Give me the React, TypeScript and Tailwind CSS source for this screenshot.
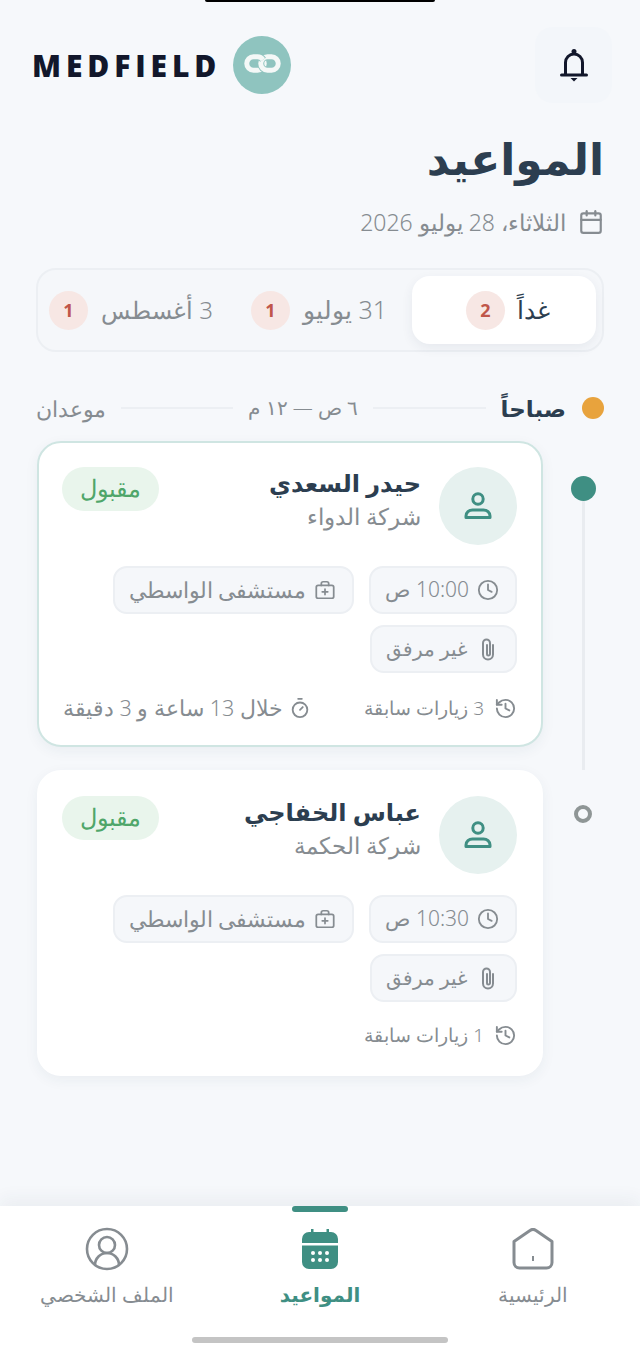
import { Calendar, Clock, History, Timer, CircleUserRound } from 'lucide-react'
import type { ReactNode } from 'react'

const ARABIC = "font-['Noto_Sans','DejaVu_Sans',sans-serif]"

function LinkLogo() {
  const left = 'M20.500 20.750h4a6.750 6.750 0 0 1 0 13.500h-4a6.750 6.750 0 0 1 0-13.500z'
  const right = 'M34.500 20.750h4a6.750 6.750 0 0 1 0 13.500h-4a6.750 6.750 0 0 1 0-13.500z'
  const over = 'M23 20.750h1.500a6.750 6.750 0 0 1 5.500 3'
  return (
    <svg viewBox="0 0 58 58" className="w-[58px] h-[58px]">
      <circle cx="29" cy="29" r="29" fill="#8fc4bf" />
      <g fill="none" strokeLinecap="butt">
        <path d={left} stroke="#f4f8f7" strokeWidth="5" />
        <path d={right} stroke="#8fc4bf" strokeWidth="7" />
        <path d={right} stroke="#f4f8f7" strokeWidth="5" />
        <path d={over} stroke="#8fc4bf" strokeWidth="7" />
        <path d={over} stroke="#f4f8f7" strokeWidth="5" />
      </g>
    </svg>
  )
}

function BellIcon() {
  return (
    <svg viewBox="0 0 28 34" className="w-7 h-[34px]" fill="none" stroke="#12172b" strokeWidth="3">
      <path d="M5.500 26V14.500a8.500 8.500 0 0 1 17 0V26" />
      <path d="M1.500 27h25" strokeLinecap="round" />
      <circle cx="14" cy="3.500" r="2.500" fill="#12172b" stroke="none" />
      <path d="M10.500 30h7L14 33.500z" fill="#12172b" stroke="none" />
    </svg>
  )
}

function PersonIcon() {
  return (
    <svg viewBox="0 0 32 32" fill="none" stroke="#3f8f83" strokeWidth="3" className="w-8 h-8">
      <circle cx="16" cy="9" r="5.200" />
      <path d="M4 27.500V26c0-3.500 3-6 6.500-6h11c3.500 0 6.500 2.500 6.500 6v1.500z" strokeLinejoin="round" />
    </svg>
  )
}

function MedicalIcon() {
  return (
    <svg viewBox="0 0 24 24" fill="none" stroke="#868c91" strokeWidth="1.900" strokeLinecap="round" strokeLinejoin="round" className="w-[22px] h-[22px]">
      <rect x="2.500" y="7" width="19" height="14" rx="2" />
      <path d="M8 7V5a2 2 0 0 1 2-2h4a2 2 0 0 1 2 2v2M12 11v6M9 14h6" />
    </svg>
  )
}

function ClipIcon() {
  return (
    <svg viewBox="4 0 16 24" fill="none" stroke="#868c91" strokeWidth="2" strokeLinecap="round" className="w-4 h-6 mr-[3px] ml-[5px]">
      <path d="M17 8v9.500a5 5 0 0 1-10 0V6a3.500 3.500 0 0 1 7 0v11a1.500 1.500 0 0 1-3 0V8" />
    </svg>
  )
}

function HomeIcon() {
  return (
    <svg viewBox="0 0 42 42" fill="none" stroke="#868c91" strokeWidth="3" strokeLinejoin="round" className="w-[42px] h-[42px]">
      <path d="M2 13.500 18 2.500a5 5 0 0 1 6 0l16 11v21a5.500 5.500 0 0 1-5.500 5.500h-27A5.500 5.500 0 0 1 2 34.500z" />
      <path d="M21 28v5" strokeWidth="2" />
    </svg>
  )
}

function CalendarFilled() {
  return (
    <svg viewBox="0 0 36 42" className="w-9 h-[42px]" fill="#3f8f83">
      <path d="M9 1h2.500v5H9zM24.500 1H27v5h-2.500z" />
      <path d="M7 4h22a7 7 0 0 1 7 7v4H0v-4a7 7 0 0 1 7-7zM0 17.500h36V34a7 7 0 0 1-7 7H7a7 7 0 0 1-7-7z" />
      <g fill="#fff">
        <circle cx="11" cy="25" r="2" /><circle cx="18" cy="25" r="2" /><circle cx="25" cy="25" r="2" />
        <circle cx="11" cy="32" r="2" /><circle cx="18" cy="32" r="2" /><circle cx="25" cy="32" r="2" />
      </g>
    </svg>
  )
}

function Chip({ icon, children }: { icon: ReactNode; children: ReactNode }) {
  return (
    <div className="h-[48px] flex items-center gap-[8px] pr-[16px] pl-[14px] bg-[#f5f7fa] border-2 border-[#eceff3] rounded-[14px] text-[21px] font-light text-[#868c91]">
      {icon}
      {children}
    </div>
  )
}

function AppointmentCard(props: { name: string; company: string; time: string; visits: string; countdown?: string; active?: boolean }) {
  return (
    <div className={`flex-1 h-[306px] bg-white rounded-[24px] pt-[24px] px-[24px] shadow-[0_4px_14px_rgba(40,60,80,0.06)] border-2 ${props.active ? 'border-[#cfe5e2]' : 'border-white'}`}>
      <div className="flex items-start gap-[18px]">
        <div className="w-[78px] h-[78px] rounded-full bg-[#e6f1ef] flex items-center justify-center shrink-0">
          <PersonIcon />
        </div>
        <div className="flex-1 -mt-[1px]">
          <div className="text-[24px] leading-[34px] font-bold text-[#2c3e50]">{props.name}</div>
          <div className="text-[22.500px] leading-[33px] font-light text-[#868c91]">{props.company}</div>
        </div>
        <div className="h-[44px] w-[97px] -ml-[1px] rounded-[22px] bg-[#e9f5ec] text-[#4fa66a] text-[23.500px] font-light flex items-center justify-center">مقبول</div>
      </div>
      <div className="flex flex-wrap gap-x-[15px] gap-y-[11px] mt-[21px]">
        <Chip icon={<Clock size={22} strokeWidth={2} />}><span>{props.time}</span></Chip>
        <Chip icon={<MedicalIcon />}><span className="text-[21.500px]">مستشفى الواسطي</span></Chip>
        <Chip icon={<ClipIcon />}><span className="text-[20px]">غير مرفق</span></Chip>
      </div>
      <div className="flex items-center justify-between mt-[19px] text-[19px] font-light text-[#868c91]">
        <div className="flex items-center gap-[10px]"><History size={23} strokeWidth={2} /><span>{props.visits}</span></div>
        {props.countdown && <div className="flex items-center gap-[6px] text-[21.500px]"><Timer size={22} strokeWidth={2} /><span>{props.countdown}</span></div>}
      </div>
    </div>
  )
}

function TabBadge({ n }: { n: number }) {
  return <span className="w-[39px] h-[39px] rounded-full bg-[#f7e7e4] text-[#c0564a] text-[18px] font-bold flex items-center justify-center">{n}</span>
}

export default function App() {
  return (
    <div dir="rtl" className={`${ARABIC} relative w-[640px] h-[1356px] bg-[#f6f8fb] flex flex-col overflow-hidden`}>
      <div className="absolute top-0 left-[205px] w-[230px] h-[2px] bg-black rounded-b-[4px]" />

      <header className="flex items-center justify-between pt-[27px] pr-[28px] pl-[32px]">
        <div className="w-[77px] h-[76px] rounded-[18px] bg-[#f3f6fa] flex items-center justify-center">
          <BellIcon />
        </div>
        <div dir="ltr" className="flex items-center gap-[12px]">
          <span className="font-['Open_Sans',sans-serif] font-extrabold text-[30px] tracking-[4.900px] text-[#12172b]">MEDFIELD</span>
          <LinkLogo />
        </div>
      </header>

      <main className="px-[36px]">
        <h1 className="text-[44px] leading-[52px] font-bold text-[#2c3e50] mt-[29px]">المواعيد</h1>
        <div className="flex items-center gap-[12px] mt-[24px] text-[#868c91] text-[23px] font-light leading-[28px]">
          <Calendar size={26} strokeWidth={2} />
          <span>الثلاثاء، 28 يوليو 2026</span>
        </div>

        <div className="flex items-center h-[84px] mt-[32px] p-[6px] rounded-[20px] bg-[#f5f7fa] border-2 border-[#eceff3] text-[25px] font-light text-[#868c91]">
          <div className="w-[184px] h-[68px] pl-[8px] bg-white rounded-[18px] shadow-[0_4px_12px_rgba(40,60,80,0.07)] flex items-center justify-center gap-[12px] text-[#2c3e50]">
            <span>غداً</span>
            <TabBadge n={2} />
          </div>
          <div className="flex items-center gap-[13px] mr-[25px]"><span>31 يوليو</span><TabBadge n={1} /></div>
          <div className="flex items-center gap-[13px] mr-[38px]"><span className="text-[24px]">3 أغسطس</span><TabBadge n={1} /></div>
        </div>

        <div className="flex items-center mt-[36px] h-[40px] text-[20px] font-light text-[#868c91]">
          <span className="w-[22px] h-[22px] rounded-full bg-[#e8a33d]" />
          <span className="mr-[16px] text-[23px] font-bold text-[#2c3e50]">صباحاً</span>
          <span className="flex-1 h-[2px] bg-[#eceff3] mx-[15px]" />
          <span>٦ ص — ١٢ م</span>
          <span className="flex-1 h-[2px] bg-[#eceff3] mx-[15px]" />
          <span className="text-[22px]">موعدان</span>
        </div>

        <div className="flex mt-[13px] gap-[19px] pb-[23px] pl-[1px]">
          <div className="w-[42px] flex flex-col items-center pt-[35px] -mb-[23px]">
            <span className="w-[25px] h-[25px] rounded-full bg-[#3f8f83]" />
            <span className="flex-1 w-[3px] bg-[#e9ecf0]" />
          </div>
          <AppointmentCard active name="حيدر السعدي" company="شركة الدواء" time="10:00 ص" visits="3 زيارات سابقة" countdown="خلال 13 ساعة و 3 دقيقة" />
        </div>
        <div className="flex gap-[19px] pl-[1px]">
          <div className="w-[42px] flex flex-col items-center pt-[35px]">
            <span className="w-[18px] h-[18px] rounded-full border-[4px] border-[#8f9696]" />
          </div>
          <AppointmentCard name="عباس الخفاجي" company="شركة الحكمة" time="10:30 ص" visits="1 زيارات سابقة" />
        </div>
      </main>

      <nav className="relative mt-auto h-[150px] bg-white shadow-[0_-8px_16px_rgba(40,60,80,0.05)] flex items-start pt-[22px] text-[#868c91] text-[20px] font-light">
        <div className="flex-1 flex flex-col items-center gap-[10px]">
          <HomeIcon />
          <span>الرئيسية</span>
        </div>
        <div className="flex-1 flex flex-col items-center gap-[10px] font-bold text-[#3f8f83]">
          <span className="absolute top-0 left-[292px] w-[56px] h-[6px] rounded-[3px] bg-[#3f8f83]" />
          <CalendarFilled />
          <span>المواعيد</span>
        </div>
        <div className="flex-1 flex flex-col items-center gap-[10px]">
          <CircleUserRound size={48} strokeWidth={1.300} className="-my-[3px]" />
          <span>الملف الشخصي</span>
        </div>
        <span className="absolute bottom-[13px] left-[192px] w-[256px] h-[6px] rounded-[3px] bg-[#c4c4c4]" />
      </nav>
    </div>
  )
}
